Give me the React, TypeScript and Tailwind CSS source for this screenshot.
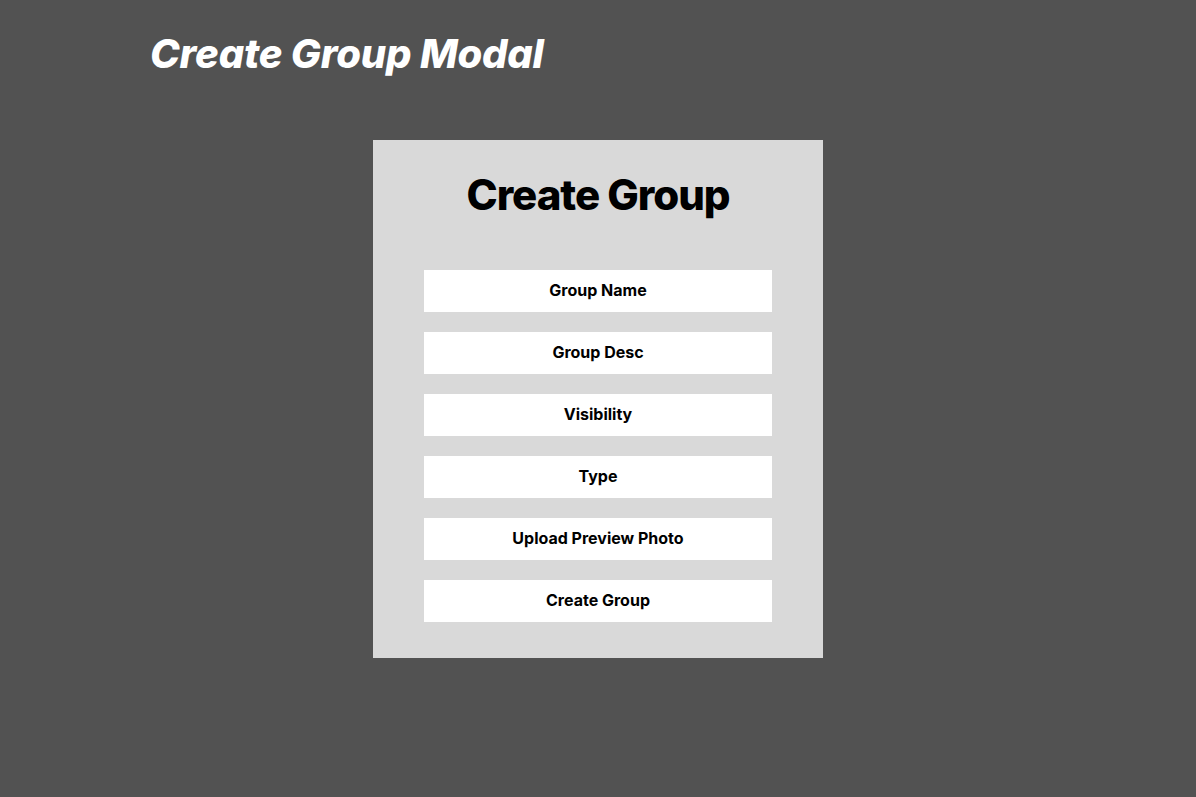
const fields = ["Group Name", "Group Desc", "Visibility", "Type", "Upload Preview Photo", "Create Group"];

export default function App() {
  return (
    <div className="min-h-screen w-full bg-[#525252] font-['Inter',sans-serif]">
      <div className="pl-[150px] pt-[34px]">
        <h1 className="text-[40px] leading-none font-extrabold italic text-white tracking-[-0.005em]">Create Group Modal</h1>
      </div>

      <div className="flex justify-center pt-[66px]">
        <div className="w-[450px] bg-[#d9d9d9] pt-[34px] pb-[36px] flex flex-col items-center">
          <h2 className="text-[42px] leading-none font-extrabold text-black tracking-[-0.025em]">Create Group</h2>
          <div className="mt-[54px] flex flex-col gap-[20px] w-[348px]">
            {fields.map((f) => (
              <div key={f} className="h-[42px] bg-white flex items-center justify-center pb-[2px] text-[16px] font-bold text-black">
                {f}
              </div>
            ))}
          </div>
        </div>
      </div>
    </div>
  );
}
